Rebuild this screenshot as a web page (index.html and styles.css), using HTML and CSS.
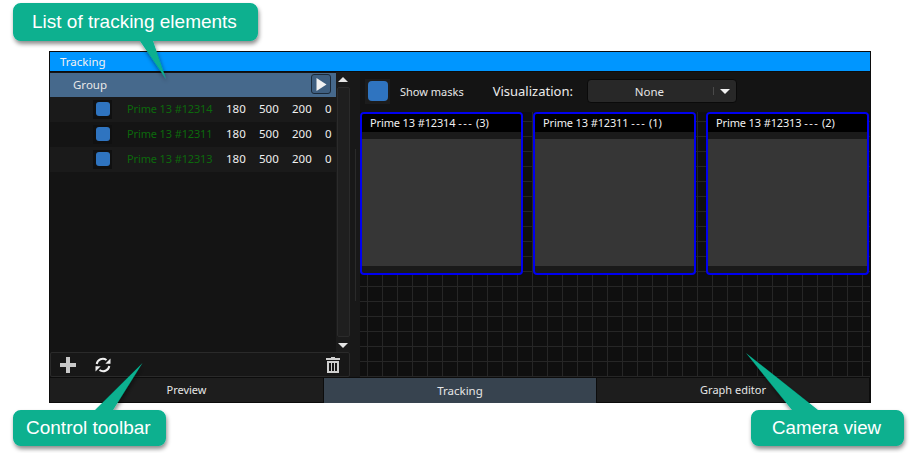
FILE: index.html
```html
<!DOCTYPE html>
<html lang="en">
<head>
<meta charset="utf-8">
<title>Tracking</title>
<link rel="stylesheet" href="styles.css">
</head>
<body>
<main class="app">
  <header class="titlebar">Tracking</header>
  <div class="workspace">
    <section class="left">
      <div class="list-area">
        <div class="list">
          <div class="group-row">
            <span>Group</span>
            <button class="play"><svg width="11" height="13" viewBox="0 0 11 13"><path d="M0.5 0L10.5 6.5L0.5 13Z" fill="#f2f2f2"/></svg></button>
          </div>
          <div class="row">
            <span class="swatch"><i></i></span><span class="name">Prime 13 #12314</span>
            <span class="num">180</span><span class="num">500</span><span class="num">200</span><span class="num">0</span>
          </div>
          <div class="row alt">
            <span class="swatch"><i></i></span><span class="name">Prime 13 #12311</span>
            <span class="num">180</span><span class="num">500</span><span class="num">200</span><span class="num">0</span>
          </div>
          <div class="row">
            <span class="swatch"><i></i></span><span class="name">Prime 13 #12313</span>
            <span class="num">180</span><span class="num">500</span><span class="num">200</span><span class="num">0</span>
          </div>
        </div>
        <div class="scrollbar">
          <svg class="arrow" width="10" height="5" viewBox="0 0 10 5"><path d="M5 0L10 5H0Z" fill="#e6e6e6"/></svg>
          <div class="thumb"></div>
          <svg class="arrow" width="10" height="5" viewBox="0 0 10 5"><path d="M0 0H10L5 5Z" fill="#e6e6e6"/></svg>
        </div>
      </div>
      <div class="controls">
        <svg class="ic-plus" width="16" height="16" viewBox="0 0 16 16"><path d="M6 0H10V6H16V10H10V16H6V10H0V6H6Z" fill="#c8c8c8"/></svg>
        <svg class="ic-sync" width="16" height="16" viewBox="0 0 16 16" fill="none" stroke="#f0f0f0" stroke-width="2"><path d="M1.700 7A6.200 6.200 0 0 1 11.500 3"/><path d="M14.300 9A6.200 6.200 0 0 1 4.500 13"/><path d="M15.500 1.500V6.700H10.300Z" fill="#f0f0f0" stroke="none"/><path d="M0.500 14.500V9.300H5.700Z" fill="#f0f0f0" stroke="none"/></svg>
        <svg class="ic-trash" width="14" height="16" viewBox="0 0 14 16"><path d="M5 0H9V1H14V3H0V1H5Z" fill="#d0d0d0"/><path d="M1 4H13V16H1ZM3 6V14H5V6ZM6 6V14H8V6ZM9 6V14H11V6Z" fill="#d0d0d0" fill-rule="evenodd"/></svg>
      </div>
    </section>
    <div class="splitter"><div class="grip"></div></div>
    <section class="right">
      <div class="view-tools">
        <span class="swatch big"><i></i></span>
        <span class="masks">Show masks</span>
        <span class="vis">Visualization:</span>
        <div class="select">
          <span class="sel-text">None</span>
          <span class="sel-sep"></span>
          <svg width="10" height="5" viewBox="0 0 10 5"><path d="M0 0H10L5 5Z" fill="#f2f2f2"/></svg>
        </div>
      </div>
      <div class="canvas">
        <article class="cam"><h2>Prime 13 #12314 <span class="dash">---</span> (3)</h2><div class="feed"></div></article>
        <article class="cam"><h2>Prime 13 #12311 <span class="dash">---</span> (1)</h2><div class="feed"></div></article>
        <article class="cam"><h2>Prime 13 #12313 <span class="dash">---</span> (2)</h2><div class="feed"></div></article>
      </div>
    </section>
  </div>
  <nav class="tabs">
    <div class="tab">Preview</div>
    <div class="tab active">Tracking</div>
    <div class="tab">Graph editor</div>
  </nav>
</main>
<svg class="shapes" width="920" height="453" viewBox="0 0 920 453">
  <defs><filter id="sh" x="-10%" y="-10%" width="120%" height="130%"><feDropShadow dx="1" dy="3" stdDeviation="2" flood-color="#000" flood-opacity=".45"/></filter></defs>
  <path filter="url(#sh)" fill="#07b08f" d="M21 3H250a8 8 0 0 1 8 8V33a8 8 0 0 1-8 8H153L166 79L140 41H21a8 8 0 0 1-8-8V11a8 8 0 0 1 8-8Z"/>
  <path filter="url(#sh)" fill="#07b08f" d="M21 410H95L142.500 363L113 410H158a8 8 0 0 1 8 8V438a8 8 0 0 1-8 8H21a8 8 0 0 1-8-8V418a8 8 0 0 1 8-8Z"/>
  <path filter="url(#sh)" fill="#07b08f" d="M759 410H792L746 353L818 410H896a8 8 0 0 1 8 8V438a8 8 0 0 1-8 8H759a8 8 0 0 1-8-8V418a8 8 0 0 1 8-8Z"/>
</svg>
<div class="label l1">List of tracking elements</div>
<div class="label l2">Control toolbar</div>
<div class="label l3">Camera view</div>
</body>
</html>
```
FILE: styles.css
```css
* { box-sizing: border-box; }
html, body { margin: 0; padding: 0; }
body {
  width: 920px; height: 453px; background: #fff; overflow: hidden;
  padding: 51px 0 0 49px; position: relative;
  font-family: "Noto Sans", "Open Sans", sans-serif;
}
.app {
  width: 822px; height: 352px; background: #0c0c0c; padding: 1px;
  display: flex; flex-direction: column; color: #e6e6e6;
}
.titlebar {
  height: 19px; background: #0096ff; color: #f2f2f2; font-size: 11.5px; line-height: 19px;
  padding-left: 10px; flex: none; margin-bottom: 1px;
}
.workspace { display: flex; height: 305px; flex: none; background: #181818; }
.left { width: 300px; flex: none; display: flex; flex-direction: column; }
.list-area { display: flex; height: 280px; flex: none; }
.list { width: 286px; background: #141414; flex: none; padding-top: 1px; }
.group-row {
  height: 24px; background: #46698c; display: flex; align-items: center; justify-content: space-between;
  padding: 0 5px 2px 23px; font-size: 11.5px; color: #e8e8e8;
}
.play {
  width: 20px; height: 20px; padding: 0; background: #3f5f80; border: 1px solid #1b2a3a; border-radius: 3px;
  display: flex; align-items: center; justify-content: center;
}
.row { height: 25px; background: #1a1a1a; display: flex; align-items: center; font-size: 11.5px; line-height: 15px; padding-left: 43px; padding-bottom: 1px; }
.row.alt { background: #141414; }
.row span:not(.swatch) { position: relative; top: -1px; }
.swatch { width: 19px; height: 19px; background: #101010; display: flex; align-items: center; justify-content: center; flex: none; }
.swatch i { display: block; width: 14px; height: 14px; background: #2f74c0; border-radius: 3px; }
.swatch.big { width: 25px; height: 25px; background: #1c1c1c; }
.swatch.big i { width: 20px; height: 20px; border-radius: 4px; }
.name { color: #0c690c; margin-left: 15px; width: 99px; white-space: nowrap; flex: none; font-size: 11px; letter-spacing: -.13px; }
.num { color: #f0f0f0; width: 33px; flex: none; }
.scrollbar { width: 14px; background: #1b1b1b; display: flex; flex-direction: column; align-items: center; padding-top: 5px; }
.thumb { width: 13px; height: 250px; margin: 5px 0 6px; background: #1f1f1f; border: 1px solid #2b2b2b; border-radius: 2px; }
.arrow { display: block; flex: none; }
.controls {
  height: 25px; border: 1px solid #2a2a2a; border-radius: 2px; background: #171717;
  display: flex; align-items: center; padding: 0 9px;
}
.ic-sync { margin-left: 19px; }
.ic-trash { margin-left: auto; }
.splitter { width: 10px; flex: none; padding: 77px 0 0 5px; }
.grip { width: 1px; height: 152px; background: #2a2a2a; }
.right { width: 510px; flex: none; display: flex; flex-direction: column; }
.view-tools { height: 40px; flex: none; background: #141414; display: flex; align-items: center; padding: 0 0 2px 5px; }
.masks { font-size: 11px; margin-left: 10px; color: #e8e8e8; }
.vis { font-size: 13px; margin-left: 29px; color: #ececec; }
.select {
  width: 150px; height: 24px; margin-left: 14px; background: #282828; border: 1px solid #0a0a0a; border-radius: 4px;
  display: flex; align-items: center; padding: 0 6px 0 0; font-size: 11.5px;
}
.sel-text { width: 123px; text-align: center; }
.sel-sep { width: 1px; height: 8px; background: #4a4a4a; margin: 0 6px 0 2px; }
.canvas {
  flex: 1; display: flex; gap: 10px; align-items: flex-start; padding-right: 1px;
  background-color: #0f0f0f;
  background-image: linear-gradient(90deg, #262626 1px, transparent 1px), linear-gradient(#262626 1px, transparent 1px);
  background-size: 15px 15px;
  background-position: 7px 9px;
}
.cam { width: 163px; height: 163px; border: 2px solid #0000f0; border-radius: 4px; background: #1a1a1a; overflow: hidden; }
.cam h2 { margin: 0; height: 18px; background: #000; color: #f0f0f0; font-size: 11px; letter-spacing: -.13px; font-weight: 400; line-height: 17px; padding-left: 8px; white-space: nowrap; }
.dash { letter-spacing: 1.5px; }
.feed { height: 127px; margin-top: 7px; background: #363636; }
.tabs { display: flex; height: 24px; flex: none; margin-top: 1px; gap: 1px; padding-right: 1px; }
.tab { flex: 1; background: #1d1d1d; font-size: 11px; text-align: center; line-height: 23px; color: #e6e6e6; }
.tab:first-child { flex: 0 0 273px; }
.tab.active { background: #37434f; height: 25px; line-height: 25px; font-size: 11.5px; }
.shapes { position: absolute; left: 0; top: 0; pointer-events: none; }
.label { position: absolute; color: #fff; font-family: "Liberation Sans", Arial, sans-serif; font-size: 19px; white-space: nowrap; line-height: 22px; }
.l1 { left: 32px; top: 11px; }
.l2 { left: 26px; top: 417px; }
.l3 { left: 772px; top: 417px; font-size: 18.7px; }
```
